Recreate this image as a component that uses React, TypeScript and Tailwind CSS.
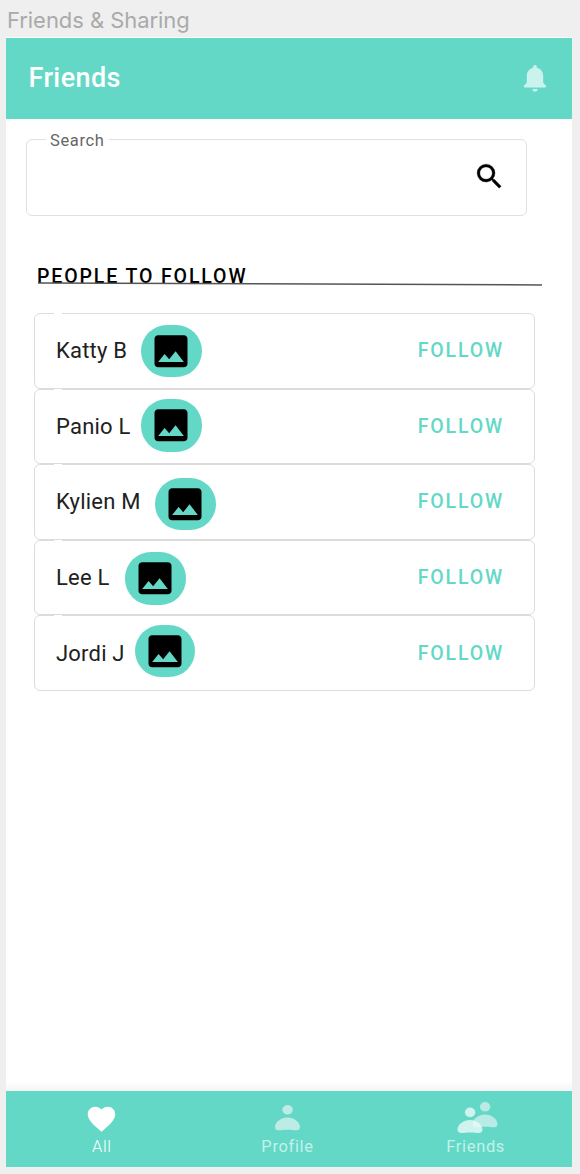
import React from "react";

type Person = { name: string; avatar: string };

const people: Person[] = [
  { name: "Katty B", avatar: "left-[106px] top-[10.9px]" },
  { name: "Panio L", avatar: "left-[106px] top-[9.6px]" },
  { name: "Kylien M", avatar: "left-[120px] top-[12.5px]" },
  { name: "Lee L", avatar: "left-[90px] top-[11.3px]" },
  { name: "Jordi J", avatar: "left-[99.5px] top-[8.2px]" },
];

function BellIcon() {
  return (
    <svg className="block h-[28px] w-[24px]" viewBox="0 0 24 28" fill="#c9f3ec">
      <path d="M12 1a1.900 1.900 0 0 1 1.900 1.900v.9C17.700 4.700 20.200 7.900 20.200 12v6.800l2.600 2.700c.8.9.4 2-.6 2H1.800c-1 0-1.400-1.100-.6-2l2.600-2.700V12c0-4.100 2.500-7.300 6.300-8.200v-.9A1.900 1.900 0 0 1 12 1z" />
      <path d="M9.300 25h5.400c-.2 1.700-1.300 2.700-2.700 2.700S9.500 26.700 9.300 25z" />
    </svg>
  );
}

function SearchIcon() {
  return (
    <svg className="block h-[33px] w-[33px]" viewBox="0 0 24 24">
      <path stroke="black" strokeWidth=".25" d="M15.500 14h-.79l-.28-.27A6.471 6.471 0 0 0 16 9.500 6.500 6.500 0 1 0 9.500 16c1.610 0 3.090-.59 4.230-1.570l.27.28v.79l5 4.990L20.490 19l-4.990-5zm-6 0C7.010 14 5 11.990 5 9.500S7.010 5 9.500 5 14 7.010 14 9.500 11.990 14 9.500 14z" />
    </svg>
  );
}

function ImageIcon() {
  return (
    <svg className="block h-[42.500px] w-[44px]" viewBox="0 0 24 24" preserveAspectRatio="none">
      <path d="M21 19V5c0-1.100-.9-2-2-2H5c-1.100 0-2 .9-2 2v14c0 1.100.9 2 2 2h14c1.100 0 2-.9 2-2zM8.500 13.500l2.500 3.010L14.500 12l4.500 6H5l3.500-4.500z" />
    </svg>
  );
}

function PersonShape() {
  return (
    <>
      <ellipse cx="12.600" cy="4.800" rx="5.200" ry="4.800" />
      <path d="M12.500 12.500C19 12.500 25 17 25 22c0 2-1.200 3.300-3.200 3.300-3 0-5.500-.5-9.300-.5s-6.300.5-9.300.5C1.200 25.300 0 24 0 22c0-5 6-9.500 12.500-9.500z" />
    </>
  );
}

function PersonRow({ name, avatar }: Person) {
  return (
    <li className="relative flex h-[75.600px] items-center justify-between rounded-[6px] border border-[#dcdcdc] pl-[21px] pr-[30px] pt-px">
      <span className="absolute -top-px left-[19px] h-px w-[8px] bg-white" />
      <span className="text-[22px] leading-[30px] tracking-[0.200px] text-[#212121]">{name}</span>
      <span className={`absolute flex h-[52.500px] w-[60.500px] items-center justify-center rounded-[26px] bg-[#64d8c6] ${avatar}`}>
        <ImageIcon />
      </span>
      <button className="text-[19.500px] font-medium leading-[24px] tracking-[1.850px] text-[#64d8c6]">FOLLOW</button>
    </li>
  );
}

export default function App() {
  return (
    <div className="flex h-[1174px] w-[580px] flex-col bg-[#efefef] pl-[6px] font-['Roboto',sans-serif]">
      <div className="h-[37px] pl-px pt-[6px] font-['Inter',sans-serif] text-[22px] leading-[28px] tracking-[-0.060px] text-[#aaaaaa]">
        Friends &amp; Sharing
      </div>
      <div className="flex h-[1130px] w-[566px] flex-col border-t border-[#f8ffff] bg-white">
        <header className="flex h-[81px] items-center justify-between bg-[#64d8c6] pb-px pl-[22.500px] pr-[25px]">
          <h1 className="text-[27px] font-medium leading-[36px] tracking-[0.400px] text-white">Friends</h1>
          <BellIcon />
        </header>
        <main className="flex flex-1 flex-col">
          <div className="relative ml-[20px] mt-[20px] flex h-[77px] w-[501px] items-center justify-end rounded-[6px] border border-[#e0e0e0] pb-[2px] pr-[20px]">
            <span className="absolute -top-[10px] left-[19px] bg-white px-[4px] text-[16.500px] leading-[22px] tracking-[0.650px] text-[#666666]">Search</span>
            <SearchIcon />
          </div>
          <div className="relative ml-[31px] mt-[49px] h-[23px]">
            <h2 className="text-[19.500px] font-medium leading-[24px] tracking-[1.880px] text-black">PEOPLE TO FOLLOW</h2>
            <svg className="absolute left-0 top-[16px] h-[6px] w-[506px]" viewBox="0 0 506 6">
              <path d="M1 2L505 4" stroke="#555555" strokeWidth="1.500" />
            </svg>
          </div>
          <ul className="ml-[28px] mt-[25px] flex w-[501px] flex-col">
            {people.map((p) => (
              <PersonRow key={p.name} {...p} />
            ))}
          </ul>
        </main>
        <div className="h-[10px] bg-linear-to-b from-white to-[#f5f5f5]" />
        <nav className="flex h-[76px] bg-[#64d8c6] pl-px text-[16.500px] leading-[22px] tracking-[0.650px]">
          <div className="flex w-[190px] flex-col items-center pt-[11px] text-white">
            <svg className="h-[34px] w-[33px]" viewBox="0 0 24 24" fill="white">
              <path d="m12 21.350-1.450-1.320C5.400 15.360 2 12.280 2 8.500 2 5.420 4.420 3 7.500 3c1.740 0 3.410.81 4.500 2.090C13.090 3.810 14.760 3 16.500 3 19.580 3 22 5.420 22 8.500c0 3.780-3.400 6.860-8.550 11.540L12 21.350z" />
            </svg>
            <span className="font-light">All</span>
          </div>
          <div className="flex w-[182px] flex-col items-center pt-[14px] text-[#c3f1ea]">
            <svg className="mb-[5px] h-[26px] w-[25px]" viewBox="0 0 25 26" fill="#bdebe5">
              <PersonShape />
            </svg>
            <span>Profile</span>
          </div>
          <div className="flex w-[194px] flex-col items-center pl-px pt-[11px] text-[#c3f1ea]">
            <svg className="mb-[2px] ml-[3px] h-[32px] w-[41px]" viewBox="0 0 41 32">
              <g fill="#c7eeea" fillOpacity=".85" transform="translate(15.500 0)">
                <PersonShape />
              </g>
              <g fill="#eafaf7" fillOpacity=".8" transform="translate(0.500 5.600)">
                <PersonShape />
              </g>
            </svg>
            <span>Friends</span>
          </div>
        </nav>
      </div>
    </div>
  );
}
